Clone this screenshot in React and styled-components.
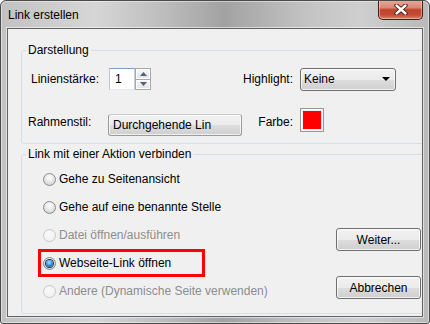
import React from "react";
import styled, { createGlobalStyle } from "styled-components";

const GlobalStyle = createGlobalStyle`
  html, body {
    margin: 0;
    padding: 0;
    background: #ffffff;
  }
  body {
    font-family: "Liberation Sans", Arial, sans-serif;
    font-size: 12px;
    color: #000;
  }
`;

const Window = styled.div`
  width: 430px;
  height: 324px;
  box-sizing: border-box;
  border: 1px solid #4a4a4a;
  border-radius: 6px 6px 3px 3px;
  background: linear-gradient(
    to right,
    #c2c2c2 0%,
    #d6d6d6 22%,
    #bdbdbd 38%,
    #a2a2a2 52%,
    #c4c4c4 72%,
    #cfcfcf 84%,
    #b9b9b9 100%
  );
  box-shadow: inset 0 0 0 1px rgba(255, 255, 255, 0.45);
  padding: 0 6px 6px;
  display: flex;
  flex-direction: column;
  overflow: hidden;
`;

const TitleBar = styled.div`
  height: 27px;
  display: flex;
  justify-content: space-between;
  align-items: flex-start;
  flex-shrink: 0;
`;

const Title = styled.div`
  padding: 7px 0 0 1px;
  line-height: 14px;
  color: #000;
`;

const CloseButton = styled.div`
  width: 45px;
  height: 20px;
  margin-top: -1px;
  box-sizing: border-box;
  border: 1px solid #4e1a14;
  border-top: none;
  border-radius: 0 0 5px 5px;
  background: linear-gradient(
    to bottom,
    #e9ab9c 0%,
    #d98874 40%,
    #c2432e 52%,
    #c54b36 78%,
    #d9806a 100%
  );
  box-shadow: inset 0 0 0 1px rgba(255, 220, 210, 0.5);
  display: flex;
  align-items: center;
  justify-content: center;
`;

const Client = styled.div`
  flex: 1;
  border: 1px solid #626262;
  box-shadow: 0 0 0 1px rgba(255, 255, 255, 0.55);
  background: #f0f0f0;
  padding: 14px 0 0 13px;
  overflow: hidden;
  display: flex;
  flex-direction: column;
`;

const GroupBox = styled.fieldset`
  margin: ${(p) => p.$top}px -8px 0 0;
  padding: ${(p) => p.$padding};
  border: 1px solid #d5dfe5;
  border-radius: 3px;
  min-width: 0;
`;

const Legend = styled.legend`
  margin-left: 4px;
  padding: 0 2px;
  line-height: 14px;
  color: #000;
`;

const SettingsGrid = styled.div`
  display: grid;
  grid-template-columns: 86px 134px 1fr auto 96px;
  grid-template-rows: 24px 28px;
  row-gap: 17px;
  padding-right: 33px;
  align-items: center;
`;

const Label = styled.span`
  margin-left: ${(p) => p.$indent || 0}px;
  line-height: 14px;
  white-space: nowrap;
`;

const RightLabel = styled(Label)`
  justify-self: end;
  padding-right: 7px;
`;

const Spinner = styled.div`
  display: flex;
  margin-left: 1px;
  height: 22px;
`;

const SpinInput = styled.div`
  width: 26px;
  box-sizing: border-box;
  border: 1px solid;
  border-color: #7f9db9 #c5d5e5 #e3e9ef #b7c7d7;
  background: #fff;
  padding-left: 5px;
  line-height: 20px;
`;

const SpinButtons = styled.div`
  width: 16px;
  display: flex;
  flex-direction: column;
`;

const SpinButton = styled.div`
  flex: 1;
  box-sizing: border-box;
  border: 1px solid #a7a7a7;
  border-top-width: ${(p) => (p.$lower ? 0 : 1)}px;
  background: linear-gradient(to bottom, #f7f7f7, #e3e3e3);
  box-shadow: inset 0 0 0 1px #fff;
  display: flex;
  align-items: center;
  justify-content: center;
`;

const Dropdown = styled.div`
  height: 23px;
  box-sizing: border-box;
  border: 1px solid #707070;
  border-radius: 3px;
  background: linear-gradient(
    to bottom,
    #f2f2f2 0%,
    #ebebeb 50%,
    #dddddd 51%,
    #cfcfcf 100%
  );
  box-shadow: inset 0 0 0 1px rgba(255, 255, 255, 0.7);
  display: flex;
  align-items: center;
  justify-content: space-between;
  padding: 0 5px 0 3px;
`;

const StyleButton = styled.div`
  align-self: end;
  height: 22px;
  box-sizing: border-box;
  border: 1px solid #9a9a9a;
  border-top-color: #c8c8c8;
  border-radius: 3px;
  background: linear-gradient(
    to bottom,
    #f2f2f2 0%,
    #ebebeb 50%,
    #dddddd 51%,
    #cfcfcf 100%
  );
  box-shadow: inset 0 0 0 1px rgba(255, 255, 255, 0.7);
  padding-left: 4px;
  line-height: 20px;
  white-space: nowrap;
  overflow: hidden;
`;

const Swatch = styled.div`
  align-self: start;
  width: 24px;
  height: 24px;
  box-sizing: border-box;
  border: 1px solid #9a9a9a;
  box-shadow: inset 0 0 0 1px #fdfdfd;
  padding: 2px;
  background: #f0f0f0;
  &::after {
    content: "";
    display: block;
    width: 100%;
    height: 100%;
    background: ${(p) => p.$color};
  }
`;

const ActionArea = styled.div`
  display: flex;
  padding-left: 16px;
`;

const OptionList = styled.div`
  flex: 1;
  display: flex;
  flex-direction: column;
  align-items: flex-start;
`;

const Option = styled.label`
  height: 28px;
  width: ${(p) => (p.$highlight ? "167px" : "auto")};
  box-sizing: border-box;
  border: 3px solid ${(p) => (p.$highlight ? "#ff0000" : "transparent")};
  padding-left: 2px;
  display: flex;
  align-items: center;
  gap: 3px;
  color: ${(p) => (p.$disabled ? "#8d8d8d" : "#000")};
  white-space: nowrap;
  line-height: 14px;
`;

const RadioMark = styled.span`
  width: 13px;
  height: 13px;
  box-sizing: border-box;
  border-radius: 50%;
  border: 1px solid ${(p) => (p.$disabled ? "#c9c9c9" : "#8a8b8c")};
  background: ${(p) =>
    p.$disabled
      ? "radial-gradient(circle at 50% 40%, #fafafa 0%, #eeeeee 100%)"
      : "radial-gradient(circle at 50% 35%, #ffffff 0%, #e8e8e8 45%, #c6c6c6 100%)"};
  display: flex;
  align-items: center;
  justify-content: center;
  flex-shrink: 0;
  &::after {
    content: "";
    display: ${(p) => (p.$checked ? "block" : "none")};
    width: 7px;
    height: 7px;
    border-radius: 50%;
    background: radial-gradient(
      circle at 45% 35%,
      #a9e4ff 0%,
      #3a9be0 45%,
      #0d3f78 100%
    );
    box-shadow: 0 0 0 1px #23344a;
  }
`;

const ButtonColumn = styled.div`
  width: 85px;
  padding-top: 63px;
  display: flex;
  flex-direction: column;
  gap: 25px;
`;

const PushButton = styled.div`
  height: 23px;
  box-sizing: border-box;
  border: 1px solid #707070;
  border-radius: 3px;
  background: linear-gradient(
    to bottom,
    #f2f2f2 0%,
    #ebebeb 50%,
    #dddddd 51%,
    #cfcfcf 100%
  );
  box-shadow: inset 0 0 0 1px rgba(255, 255, 255, 0.75);
  display: flex;
  align-items: center;
  justify-content: center;
`;

const Radio = ({ label, checked, disabled, highlight }) => (
  <Option $disabled={disabled} $highlight={highlight}>
    <RadioMark $checked={checked} $disabled={disabled} />
    {label}
  </Option>
);

const Arrow = ({ up, color = "#4d6185", w = 7, h = 4 }) => (
  <svg width={w} height={h} viewBox={`0 0 ${w} ${h}`}>
    <polygon
      points={up ? `0,${h} ${w},${h} ${w / 2},0` : `0,0 ${w},0 ${w / 2},${h}`}
      fill={color}
    />
  </svg>
);

const options = [
  { label: "Gehe zu Seitenansicht" },
  { label: "Gehe auf eine benannte Stelle" },
  { label: "Datei öffnen/ausführen", disabled: true },
  { label: "Webseite-Link öffnen", checked: true, highlight: true },
  { label: "Andere (Dynamische Seite verwenden)", disabled: true },
];

export default function App() {
  return (
    <>
      <GlobalStyle />
      <Window>
        <TitleBar>
          <Title>Link erstellen</Title>
          <CloseButton>
            <svg width="14" height="11" viewBox="0 0 14 11">
              <path
                d="M2.5 1.5 L11.5 9.5 M11.5 1.5 L2.5 9.5"
                stroke="#3a1410"
                strokeWidth="4.2"
                strokeLinecap="round"
              />
              <path
                d="M2.5 1.5 L11.5 9.5 M11.5 1.5 L2.5 9.5"
                stroke="#ffffff"
                strokeWidth="2.4"
                strokeLinecap="round"
              />
            </svg>
          </CloseButton>
        </TitleBar>
        <Client>
          <GroupBox $top={0} $padding="10px 0 7px 0">
            <Legend>Darstellung</Legend>
            <SettingsGrid>
              <Label $indent={9}>Linienstärke:</Label>
              <Spinner>
                <SpinInput>1</SpinInput>
                <SpinButtons>
                  <SpinButton>
                    <Arrow up />
                  </SpinButton>
                  <SpinButton $lower>
                    <Arrow />
                  </SpinButton>
                </SpinButtons>
              </Spinner>
              <span />
              <RightLabel>Highlight:</RightLabel>
              <Dropdown>
                <span>Keine</span>
                <Arrow color="#000" w={8} h={4} />
              </Dropdown>

              <Label $indent={6}>Rahmenstil:</Label>
              <StyleButton>Durchgehende Lin</StyleButton>
              <span />
              <RightLabel>Farbe:</RightLabel>
              <Swatch $color="#ff0000" />
            </SettingsGrid>
          </GroupBox>

          <GroupBox $top={3} $padding="4px 8px 8px 0">
            <Legend>Link mit einer Aktion verbinden</Legend>
            <ActionArea>
              <OptionList>
                {options.map((o) => (
                  <Radio key={o.label} {...o} />
                ))}
              </OptionList>
              <ButtonColumn>
                <PushButton>Weiter...</PushButton>
                <PushButton>Abbrechen</PushButton>
              </ButtonColumn>
            </ActionArea>
          </GroupBox>
        </Client>
      </Window>
    </>
  );
}
